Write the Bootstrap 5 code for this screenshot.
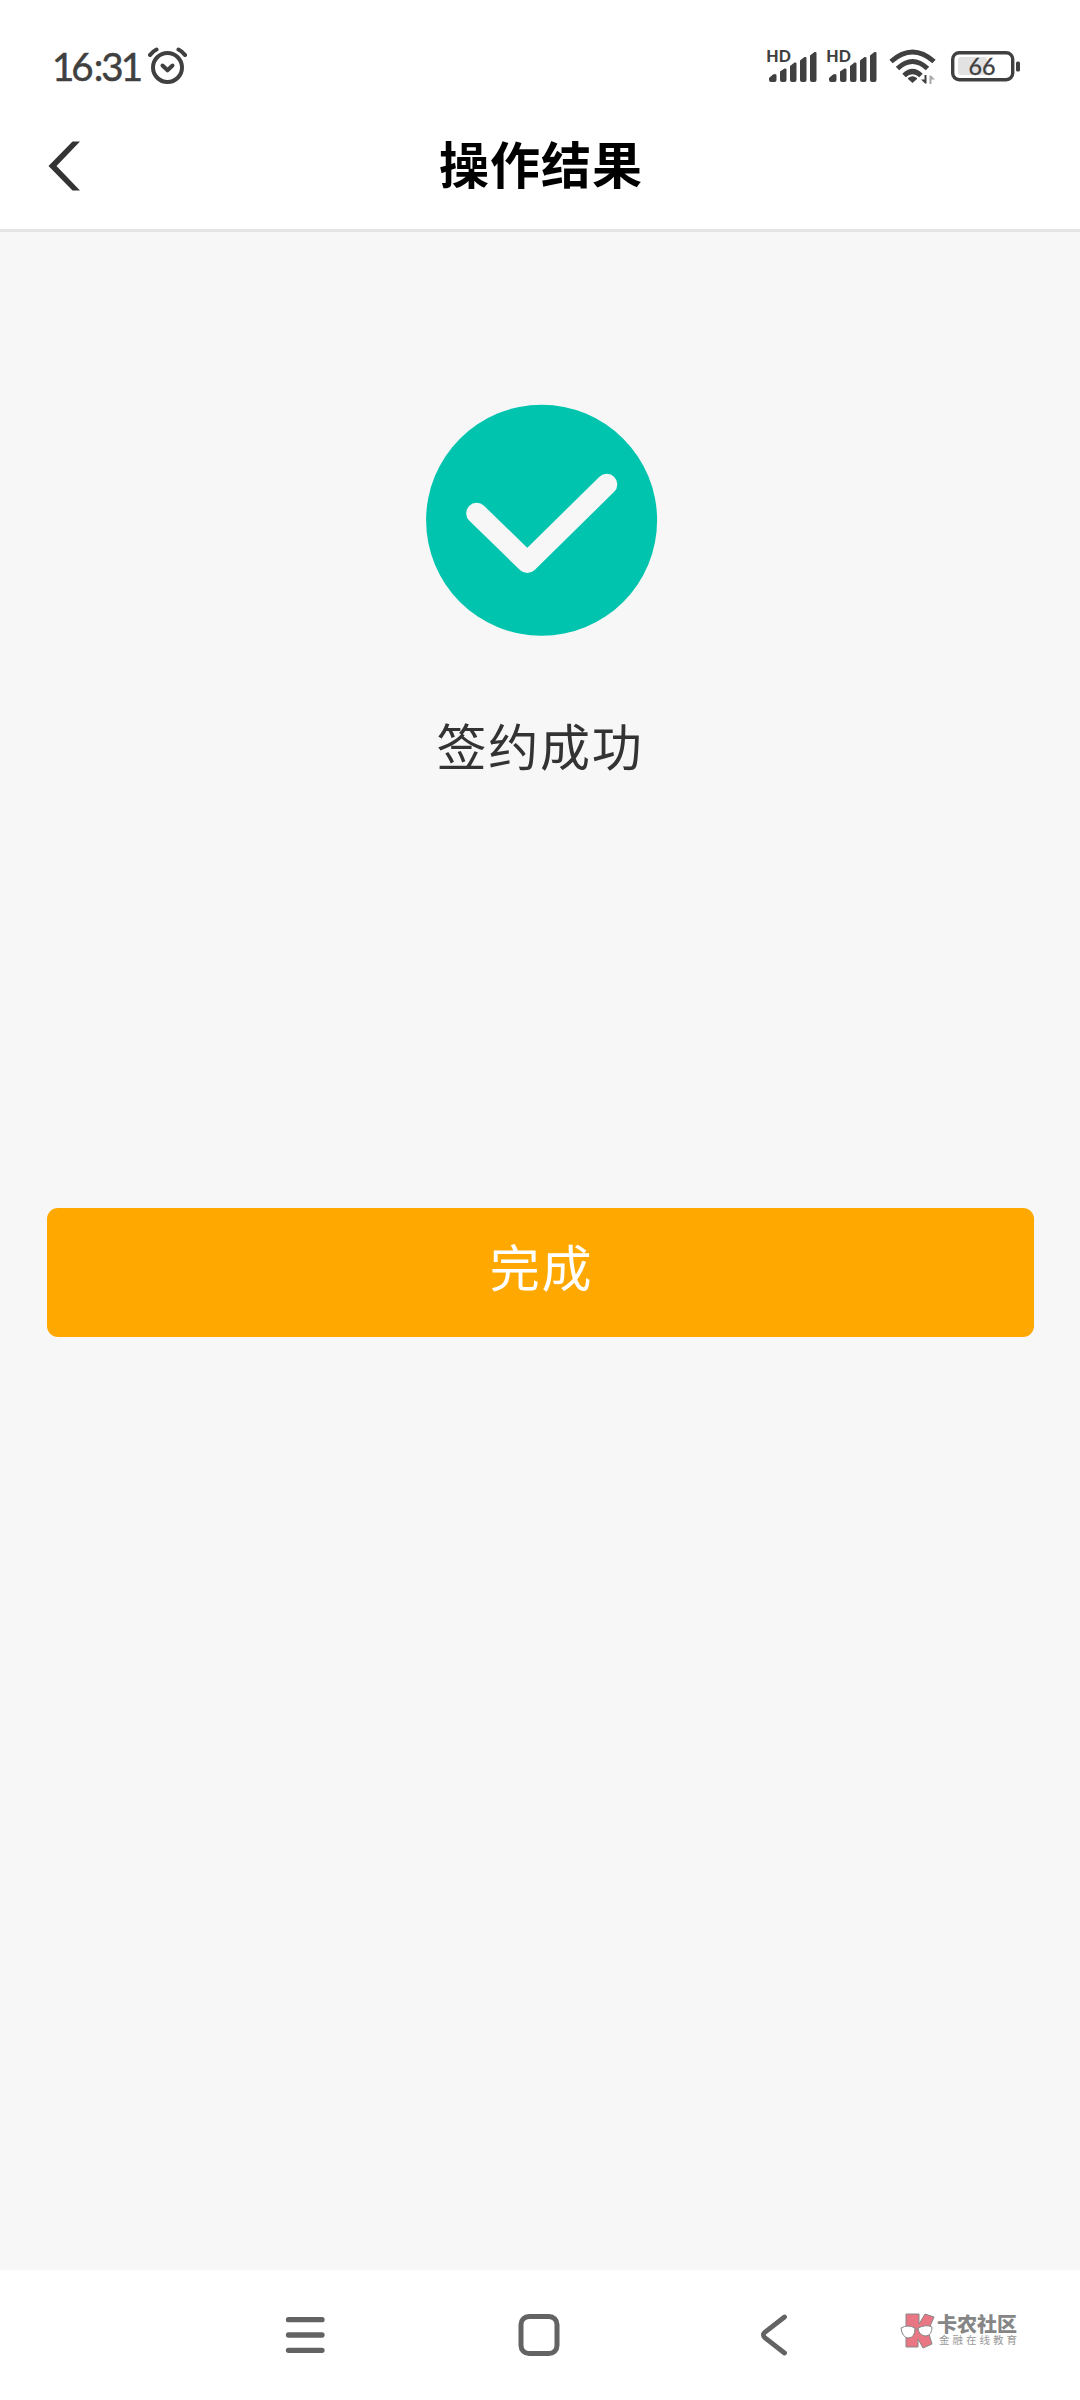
<!DOCTYPE html>
<html lang="zh-CN">
<head>
<meta charset="utf-8">
<meta name="viewport" content="width=device-width, initial-scale=1">
<title>操作结果</title>
<link href="https://cdn.jsdelivr.net/npm/bootstrap@5.3.0/dist/css/bootstrap.min.css" rel="stylesheet">
<style>
body{font-family:"Noto Sans","Noto Sans CJK SC",sans-serif;background:#f7f7f7;color:#333}
svg{display:block;flex:none}
.screen{height:2400px;overflow:hidden}
.status{height:110px;padding:22px 59px 0 52px;color:#404040}
.clock{font-family:Lato,sans-serif;font-size:38.5px;line-height:44px;width:95px;white-space:nowrap;letter-spacing:-3px;-webkit-text-stroke:.5px #404040}
.colon{margin:0 1px 0 3px}
.page-head{height:122px;border-bottom:3px solid #e4e4e4;padding:0 46px 8px 48px}
.page-title{font:700 50px/60px "Noto Sans CJK SC",sans-serif;letter-spacing:1px;color:#000;padding-bottom:7px}
.side{width:32px}
.result{padding-top:172px}
.result-text{font:400 50px/60px "Noto Sans CJK SC",sans-serif;letter-spacing:1.8px;margin-top:78px}
.done{margin:434px 46px 0 47px;height:129px;border-radius:11px;background:#ffa900;color:#fff;border:0;font:400 50px/60px "Noto Sans CJK SC",sans-serif;letter-spacing:1.8px;padding:0 0 16px 2px}
.done:hover{background:#ffa900;color:#fff}
.sysnav{height:130px;padding:0 60px 0 285px}
.key-home{margin-left:193px}
.key-back{margin-left:199px}
.brand{padding-bottom:9px}
.brand-a{font:900 20px/19px "Noto Sans CJK SC",sans-serif;color:#868686}
.brand-b{font:400 10.500px/14px "Noto Sans CJK SC",sans-serif;letter-spacing:3px;color:#999;padding-left:2px}
</style>
<script src="https://cdn.jsdelivr.net/npm/bootstrap@5.3.0/dist/js/bootstrap.bundle.min.js"></script>
</head>
<body>
<div class="screen d-flex flex-column">
  <header class="bg-white">
    <div class="status d-flex align-items-center">
      <span class="clock">16<span class="colon">:</span>31</span>
      <svg width="40" height="40" viewBox="147 46 40 40" fill="none" stroke="#404040" stroke-width="4" stroke-linecap="round" stroke-linejoin="round"><circle cx="167.500" cy="67.500" r="14.500"/><path d="M162.500 65.500l5 4.800 5-4.800"/><path d="M150 55q2.500-3.500 6.500-5.500M178.500 49.500q4 2 6.500 5.500"/></svg>
      <svg class="ms-auto" width="254" height="44" viewBox="767 44 254 44">
        <defs><g id="signal"><path d="M1.500 28l4-3.500q3.500-1.500 3.500 1V30a2 2 0 0 1-2 2H3.500a2 2 0 0 1-2-2zM12.500 21.500l4.500-3q2-.5 2 1V30a2 2 0 0 1-2 2h-2.500a2 2 0 0 1-2-2zM22.500 16l4.500-3.500q2-.5 2 1V30a2 2 0 0 1-2 2h-2.500a2 2 0 0 1-2-2zM32.500 10.500l4.500-3.500q2-.5 2 1V30a2 2 0 0 1-2 2h-2.500a2 2 0 0 1-2-2zM42.500 5.500l4.500-3.500q2-.5 2 1V30a2 2 0 0 1-2 2h-2.500a2 2 0 0 1-2-2z"/><text x="-1.200" y="11.800" textLength="24.500" lengthAdjust="spacingAndGlyphs" font-family="Lato" font-weight="900" font-size="16">HD</text></g></defs>
        <g fill="#404040"><use href="#signal" x="767.500" y="50"/><use href="#signal" x="827.500" y="50"/></g>
        <g fill="none" stroke="#404040" stroke-width="5"><path d="M891 61.500q21.500-19 43 0M897.500 68.500q15-14 30 0M904 75.500q8.500-8 17 0"/></g>
        <path d="M908 78q4.500-3.500 9 0v1l-4.500 4-4.500-4z" fill="#404040"/>
        <path d="M926.500 75v8.500h-1.500l-4-4h3.500V75z" fill="#404040"/><path d="M929.500 84v-8.500h1.500l4 4h-3.500V84z" fill="#aaa"/>
        <rect x="958" y="57" width="29" height="18" rx="3" fill="#e2e2e2"/>
        <rect x="952.700" y="52.700" width="60" height="27" rx="6.500" fill="none" stroke="#404040" stroke-width="3.400"/>
        <rect x="1016" y="61.500" width="4" height="10" rx="1.500" fill="#404040"/>
        <text x="968.500" y="75" textLength="27" lengthAdjust="spacingAndGlyphs" font-family="Lato" font-weight="400" font-size="24" fill="#404040" stroke="#404040" stroke-width=".3">66</text>
      </svg>
    </div>
    <div class="page-head d-flex align-items-center justify-content-between">
      <svg width="32" height="50" viewBox="0 0 32 50"><path d="M24.500 0.500H32L8.500 25 32 49.500h-7.500L.5 25z" fill="#333"/></svg>
      <h1 class="page-title m-0">操作结果</h1>
      <span class="side"></span>
    </div>
  </header>
  <main class="flex-grow-1 d-flex flex-column">
    <div class="result d-flex flex-column align-items-center">
      <svg width="236" height="232" viewBox="-2 0 236 232"><circle cx="117.600" cy="116.300" r="115.500" fill="#00c4ad"/><path d="M52.700 109.300l50.600 49.200L182.800 80.300" fill="none" stroke="#f7f7f7" stroke-width="21" stroke-linecap="round" stroke-linejoin="round"/></svg>
      <p class="result-text mb-0">签约成功</p>
    </div>
    <button type="button" class="done btn">完成</button>
  </main>
  <nav class="sysnav bg-white d-flex align-items-center">
    <svg width="40" height="42" viewBox="0 0 40 42" stroke="#636363" stroke-width="5.300" stroke-linecap="round"><path d="M3.500 5.700h33.500M3.500 21h33.500M3.500 36.300h33.500"/></svg>
    <svg class="key-home" width="42" height="42" viewBox="0 0 42 42"><rect x="3" y="2.500" width="36" height="37" rx="8" fill="none" stroke="#636363" stroke-width="5"/></svg>
    <svg class="key-back" width="30" height="42" viewBox="-1 0 30 42"><path d="M24.500 3L4.800 18.300q-2.800 2.700 0 5.400L24.500 39" fill="none" stroke="#636363" stroke-width="4.800" stroke-linecap="round"/></svg>
    <div class="brand d-flex align-items-center ms-auto">
      <svg width="37" height="38" viewBox="0 0 37 38"><path d="M6 2h13v10l6-10 9 3-6 14 4 13-9 4-5-9v8H6z" fill="#e87783" stroke="#888"/><path d="M1 16q7-4 14 0 0 10-7 10Q2 25 1 16zM18 16q8-4 14-1 0 8-6 9-7 0-8-8zM15 17q1-1 3 0" fill="#fff" stroke="#888"/></svg>
      <div><div class="brand-a">卡农社区</div><div class="brand-b">金融在线教育</div></div>
    </div>
  </nav>
</div>
</body>
</html>
